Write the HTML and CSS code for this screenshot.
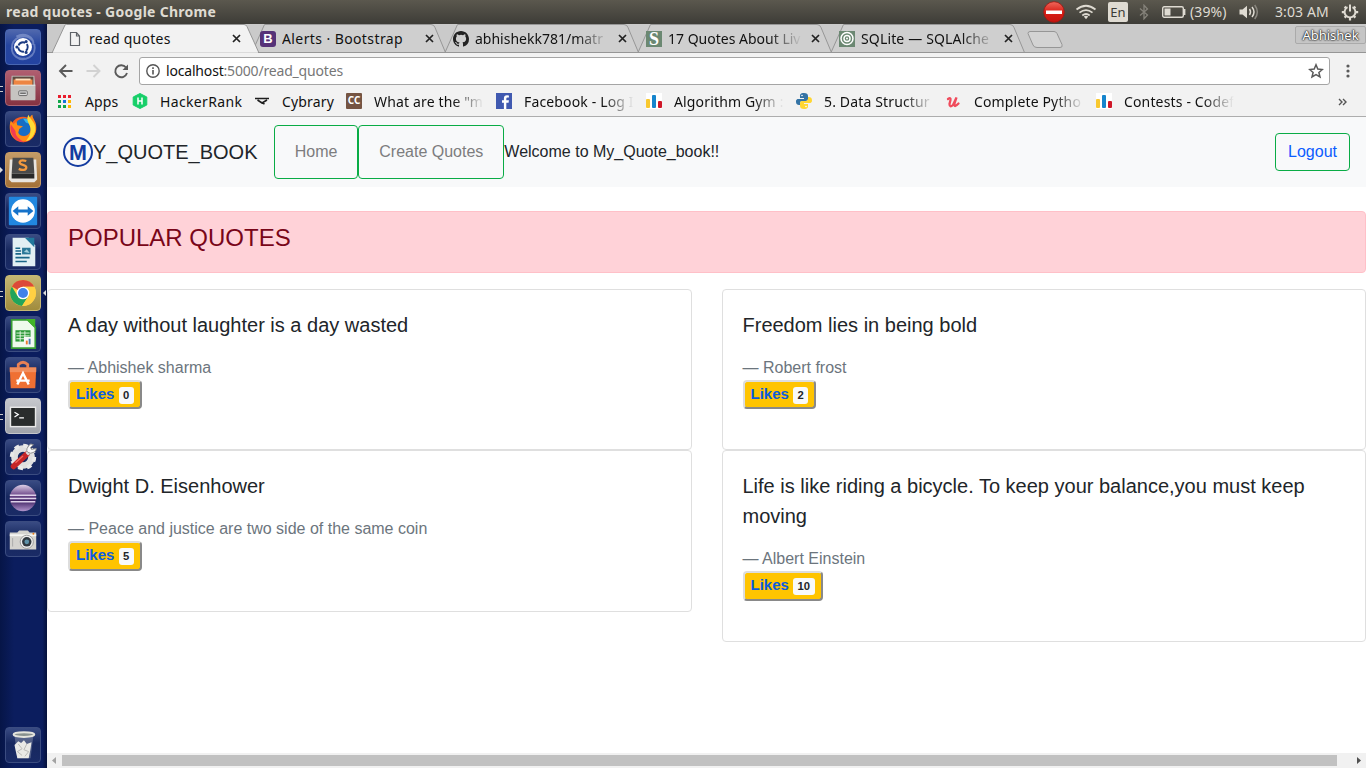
FILE: index.html
```html
<!DOCTYPE html>
<html lang="en">
<head>
<meta charset="utf-8">
<title>read quotes</title>
<link rel="stylesheet" href="styles.css">
</head>
<body>
<header class="panel">
  <span class="panel-title">read quotes - Google Chrome</span>
  <div class="indicators">
    <svg class="ind-stop" width="22" height="22" viewBox="0 0 22 22"><defs><linearGradient id="stop" x2="0" y2="1"><stop stop-color="#f0695c"/><stop offset=".5" stop-color="#d91f17"/><stop offset="1" stop-color="#c5140f"/></linearGradient></defs><circle cx="11" cy="11" r="10.3" fill="url(#stop)" stroke="#a51510" stroke-width=".8"/><rect x="3" y="9.5" width="16" height="3.500" fill="#fff"/></svg>
    <svg class="ind-wifi" width="22" height="16" viewBox="0 0 22 16" fill="none" stroke="#dfdbd2" stroke-width="1.7"><path d="M1.500 5.500Q11-2 20.500 5.500M4.500 8.700Q11 3.500 17.500 8.700M7.300 11.500Q11 8.500 14.700 11.500"/><path d="M8.800 12.500L11 15.300l2.200-2.800Q11 11 8.800 12.500z" fill="#dfdbd2" stroke="none"/></svg>
    <span class="keyboard">En</span>
    <svg class="ind-bt" width="10" height="16" viewBox="0 0 10 16" fill="none" stroke="#85827a" stroke-width="1.300"><path d="M1 4.500l7.500 6.500L5 14.800V1.200L8.500 5 1 11.500"/></svg>
    <svg class="ind-bat" width="24" height="12" viewBox="0 0 24 12"><rect x=".7" y=".7" width="20.600" height="10.600" rx="1.500" fill="none" stroke="#dfdbd2" stroke-width="1.400"/><path d="M2.500 2.500h6v7h-6z" fill="#dfdbd2"/><path d="M22.500 3v6" stroke="#dfdbd2" stroke-width="1.800"/></svg>
    <span class="battery">(39%)</span>
    <svg class="ind-vol" width="20" height="16" viewBox="0 0 20 16"><path d="M.5 5.500h3L8 1.800v12.400L3.500 10.500h-3z" fill="#dfdbd2"/><g fill="none" stroke-width="1.500"><path d="M10.500 5q2 3 0 6" stroke="#dfdbd2"/><path d="M13 3q4 5 0 10" stroke="#dfdbd2"/><path d="M15.700 1q5.300 7 0 14" stroke="#8a877f"/></g></svg>
    <span class="clock">3:03 AM</span>
    <svg class="ind-gear" width="18" height="18" viewBox="0 0 18 18" fill="none" stroke="#dfdbd2"><path d="M6.500 4.200a5.400 5.400 0 1 0 5 0" stroke-width="1.900"/><path d="M9 1.500v7" stroke-width="2"/><path d="M3.600 3.600l1.700 1.700M14.400 3.600l-1.700 1.700M.8 9.200h2.500M14.700 9.200h2.500M3.600 14.600l1.700-1.700M14.400 14.600l-1.700-1.700M9 14.700v2.700" stroke-width="2.200"/></svg>
  </div>
</header>
<div class="desktop">
  <nav class="dock">
    <div class="tile t-dash"><svg viewBox="0 0 36 36"><g fill="none" stroke="#a4b4e0" opacity=".5" stroke-width="2"><path d="M6 20C6 7 22 2 29 12M30 15c3 13-11 20-20 13M11 7c8-5 19 0 18 9M7 17c-3 8 5 15 13 13"/></g><circle cx="18" cy="18" r="9.500" fill="#fff"/><circle cx="18" cy="18" r="5" fill="none" stroke="#1d3c82" stroke-width="2" stroke-dasharray="8.400 2.070" stroke-dashoffset="4"/><g fill="#1d3c82"><circle cx="11.500" cy="18" r="1.600"/><circle cx="21.300" cy="12.300" r="1.600"/><circle cx="21.300" cy="23.700" r="1.600"/></g></svg></div>
    <div class="tile t-files pips"><svg viewBox="0 0 36 36"><path d="M6 5h24l1 10v15H5V15z" fill="#bdbab6"/><path d="M7 6h22v9H7z" fill="#5f4a40"/><path d="M8 9h20v6H8z" fill="#ed8543"/><path d="M10 8h16v2H10z" fill="#ffe0bb"/><path d="M5 15h26v16H5z" fill="#c6c4c1"/><path d="M5 15h26" stroke="#eee"/><rect x="13.500" y="21" width="9" height="5" rx="1" fill="#ddd" stroke="#666"/><path d="M15 23.500h6" stroke="#555" stroke-width="1.300"/></svg></div>
    <div class="tile"><svg viewBox="0 0 36 36"><circle cx="18" cy="18.500" r="13.500" fill="#f65d20"/><circle cx="19" cy="16" r="9.500" fill="#176dc5"/><path d="M18 7q7-1 10 8-3-3-7-4z" fill="#34b7ed"/><path d="M5 9l3 4 3-3 1 4 6 1-4 3-1 4c2 5 9 5 12 0 3-6-1-8-1-12q1-6 4-7c0 5 5 7 4 16-2 12-17 16-25 7C4 23 3 15 5 9z" fill="#ff8b16"/><path d="M24 3c1 5 8 8 7 16-1 6-5 11-10 12 5-6 7-12 3-19-2-4-2-6 0-9z" fill="#ffdb35"/><path d="M5 13C3 23 10 32 19 32c-5-4-9-6-9-12z" fill="#f23c52"/></svg></div>
    <div class="tile t-sublime arrow"><svg viewBox="0 0 36 36"><path d="M4 7h28l1 21-3 3H6l-3-3z" fill="#e9e5df"/><path d="M7 5h22l1 17H6z" fill="#4b4b4b"/><path d="M6 22h24v5H6z" fill="#292929"/><path d="M21.500 8.500q-6-2-7 1c-1 3.500 7 2.500 7 5.500 0 3.500-4.500 3.500-8 1.800" fill="none" stroke="#f39a3f" stroke-width="2.400"/></svg></div>
    <div class="tile"><svg viewBox="0 0 36 36"><rect x="3" y="3" width="30" height="30" rx="1" fill="#2187df"/><circle cx="18" cy="18" r="12.500" fill="#fff"/><path d="M7 18l6-5v3.500h10V13l6 5-6 5v-3.500H13V23z" fill="#1572ca"/></svg></div>
    <div class="tile"><svg viewBox="0 0 36 36"><path d="M7 3h17l7 8v22H7z" fill="#e2f0f4"/><path d="M20 3h10v10z" fill="#22789c"/><path d="M10 14h5M10 17h6M10 20h6M10 24h15M10 28h12" stroke="#196687" stroke-width="1.700"/><path d="M17 13.500h9v7h-9z" fill="#2b7898"/><path d="M19 18l3-3 3 4z" fill="#a5d0dc"/></svg></div>
    <div class="tile t-chrome pips active"><svg viewBox="0 0 36 36"><circle cx="18" cy="18" r="13.700" fill="#ffd043"/><path d="M18 18L6.200 11A13.700 13.700 0 0 1 30 11.500H18z" fill="#dc4939"/><path d="M6.200 11.100A13.700 13.700 0 0 0 17 31.700L24 21l-12 0z" fill="#22a45b"/><path d="M18 11.500h12A13.700 13.700 0 0 1 17 31.700L24 21z" fill="#ffd043"/><circle cx="18" cy="18" r="6.700" fill="#fff"/><circle cx="18" cy="18" r="5.300" fill="#4182e9"/></svg></div>
    <div class="tile"><svg viewBox="0 0 36 36"><path d="M6 3h17l8 8v22H6z" fill="#eefaec" stroke="#379d34" stroke-width="1.800"/><path d="M21 2h10v10z" fill="#42b528"/><path d="M10 14h16v12H10z" fill="#2d9939"/><path d="M11 17h14M11 20h14M11 23h14M15 15v11M20 15v11" stroke="#e6f9e3"/><path d="M19 21h9v9h-9z" fill="#f8f8f8"/><path d="M21 25h2v4h-2z" fill="#ea7a2c"/><path d="M24 23h2v6h-2z" fill="#467cae"/></svg></div>
    <div class="tile"><svg viewBox="0 0 36 36"><path d="M13 11V7q5-5 10 0v4" fill="none" stroke="#e98154" stroke-width="3"/><path d="M4 10h28l-1 22H5z" fill="#ef7033"/><path d="M4 10h28v5H4z" fill="#f18e5d"/><path d="M12 28l6-12 6 12M11 24h14" fill="none" stroke="#fff" stroke-width="2.500"/></svg></div>
    <div class="tile t-term pips"><svg viewBox="0 0 36 36"><path d="M4 8h28v22H4z" fill="#e8e8e8"/><path d="M5.500 9.500h25v19h-25z" fill="#292c2c"/><path d="M9 14l4 2.500L9 19M14 20h5" fill="none" stroke="#fff" stroke-width="1.300"/></svg></div>
    <div class="tile"><svg viewBox="0 0 36 36"><circle cx="18" cy="18" r="9" fill="none" stroke="#dfdfdf" stroke-width="7"/><circle cx="18" cy="18" r="12" fill="none" stroke="#e9e9e9" stroke-width="4" stroke-dasharray="5 4.400"/><path d="M8 28L22 15" stroke="#c52527" stroke-width="6" stroke-linecap="round"/><path d="M10 24l8-7" stroke="#f26a60" stroke-width="1.500"/><path d="M22 15l5-5" stroke="#ddd" stroke-width="4"/><path d="M24 6q-5 7 2 8 6-1 6-5l-5 1-1-2 3-3q-3-2-5 1z" fill="#f7f7f7" stroke="#8b8b8b"/></svg></div>
    <div class="tile"><svg viewBox="0 0 36 36"><defs><linearGradient id="orb" x2="0" y2="1"><stop stop-color="#ddd0e7"/><stop offset=".4" stop-color="#6c4688"/><stop offset=".6" stop-color="#3d2061"/><stop offset="1" stop-color="#b194cc"/></linearGradient></defs><circle cx="18" cy="18" r="14" fill="url(#orb)"/><path d="M4 15h28M4 18.500h28M5 22h26" stroke="#ddd1e9" stroke-width="1.500"/></svg></div>
    <div class="tile"><svg viewBox="0 0 36 36"><path d="M4 11h8l2-2h9l2 2h7v18H4z" fill="#d4d3cf"/><path d="M4 14h28" stroke="#f6f6f3" stroke-width="2"/><circle cx="22" cy="21" r="7" fill="#eee" stroke="#999"/><circle cx="22" cy="21" r="5" fill="#30383f"/><circle cx="22" cy="21" r="2.500" fill="#5d91a8"/><circle cx="29" cy="12.500" r="1" fill="#e87a1a"/><path d="M7 17v9" stroke="#aaa"/></svg></div>
    <div class="tile t-trash"><svg viewBox="0 0 36 36"><path d="M9 8h20l-3 24H12z" fill="#b8bdc9" opacity=".35"/><path d="M9 18l4-4 3 2 3-3 3 4 5-2-1 7-2 10H12L10 23z" fill="#e9e9e6"/><path d="M13 17l4 5-5 3 5 4M22 17l-3 6 5 2-4 5" fill="none" stroke="#b8b8b5"/><ellipse cx="19" cy="7" rx="11" ry="2.500" fill="#87908e" stroke="#e4e4dd" stroke-width="2"/></svg></div>
  </nav>
  <div class="browser">
    <div class="tabs">
      <svg class="tab-shapes" width="1319" height="29" viewBox="0 0 1319 29" fill="#cfcfcf" stroke="#969696"><path d="M0 28.500H1319" fill="none"/><path d="M784 28.500L796.500.5H963q3 0 4 3L977.500 28.500M591 28.500L603.500.5H770q3 0 4 3L784.500 28.500M398 28.500L410.500.5H577q3 0 4 3L591.500 28.500M205 28.500L217.500.5H384q3 0 4 3L398.500 28.500"/><path d="M5 29L18 1Q18.300.5 19.500.5H197q2 0 3 2L212 29z" fill="#f2f2f2"/><path d="M6 29H211" stroke="#f2f2f2"/><path d="M0 28.500H6M211 28.500H1319" /><path d="M983 7.500h24q2 0 3 2l5 11q1 3-2 3h-23q-3 0-4-2.500L981 9.500q0-2 2-2z" fill="#d3d3d3"/></svg>
      <div class="tab"><svg width="16" height="16" viewBox="0 0 16 16" fill="none" stroke="#5f6368"><path d="M3.500 1.500h6l3 3.500v9.500h-9zM9.500 1.500V5h3" stroke-width="1.200"/></svg><span class="tab-label t1">read quotes</span><svg class="close" viewBox="0 0 9 9"><path d="M1 1l7 7M8 1L1 8"/></svg></div>
      <div class="tab"><span class="fav boot">B</span><span class="tab-label t2">Alerts · Bootstrap</span><svg class="close" viewBox="0 0 9 9"><path d="M1 1l7 7M8 1L1 8"/></svg></div>
      <div class="tab"><svg width="16" height="16" viewBox="0 0 16 16"><path fill="#222" d="M8 0C3.580 0 0 3.580 0 8c0 3.540 2.290 6.530 5.470 7.590.4.070.55-.17.55-.38 0-.19-.01-.82-.01-1.490-2.010.37-2.530-.49-2.690-.94-.09-.23-.48-.94-.82-1.130-.28-.15-.68-.52-.01-.53.63-.01 1.080.58 1.230.82.72 1.210 1.870.87 2.330.66.070-.52.28-.87.51-1.070-1.780-.2-3.640-.89-3.640-3.950 0-.87.31-1.590.82-2.150-.08-.2-.36-1.020.08-2.120 0 0 .67-.21 2.200.82a7.500 7.500 0 0 1 4 0c1.530-1.040 2.200-.82 2.200-.82.44 1.100.16 1.920.08 2.120.51.56.82 1.270.82 2.150 0 3.070-1.870 3.750-3.650 3.950.29.25.54.73.54 1.480 0 1.070-.01 1.930-.01 2.200 0 .21.15.46.55.38A8 8 0 0 0 16 8c0-4.420-3.580-8-8-8z"/></svg><span class="tab-label long">abhishekk781/matr</span><svg class="close" viewBox="0 0 9 9"><path d="M1 1l7 7M8 1L1 8"/></svg></div>
      <div class="tab"><span class="fav quotes">S</span><span class="tab-label long">17 Quotes About Liv</span><svg class="close" viewBox="0 0 9 9"><path d="M1 1l7 7M8 1L1 8"/></svg></div>
      <div class="tab"><svg width="16" height="16" viewBox="0 0 16 16"><path d="M0 0h16v16H0z" fill="#6b8872"/><g fill="none" stroke="#fff" stroke-width="1.500"><circle cx="8" cy="7.500" r="6"/><circle cx="8" cy="7.500" r="3"/></g><circle cx="8" cy="7.500" r="1" fill="#fff"/></svg><span class="tab-label long t5">SQLite — SQLAlche</span><svg class="close" viewBox="0 0 9 9"><path d="M1 1l7 7M8 1L1 8"/></svg></div>
      <span class="profile">Abhishek</span>
    </div>
    <div class="toolbar">
      <svg width="82" height="20" viewBox="0 0 82 20" fill="none" stroke-width="1.900"><path d="M15.500 10H2.500M9 4l-6 6 6 6" stroke="#5a5a5a"/><path d="M29.500 10H42M36.500 4l6 6-6 6" stroke="#d2d2d2"/><path d="M69 6.500A6 6 0 1 0 70 12" stroke="#5a5a5a"/><path d="M71 3.500V9h-5.500z" fill="#5a5a5a" stroke="none"/></svg>
      <div class="address">
        <svg width="14" height="14" viewBox="0 0 14 14" fill="none" stroke="#555"><circle cx="7" cy="7" r="6.200" stroke-width="1.400"/><path d="M7 6v4.500M7 3.300V5" stroke-width="1.600"/></svg>
        <span class="url">localhost<span class="url-rest">:5000/read_quotes</span></span>
        <svg class="star" width="16" height="16" viewBox="0 0 16 16" fill="none" stroke="#5a5a5a" stroke-width="1.500"><path d="M8 1.800l1.800 4.300 4.600.4-3.500 3 1.100 4.500L8 11.600 4 14l1.100-4.500-3.500-3 4.600-.4z"/></svg>
      </div>
      <svg width="4" height="16" viewBox="0 0 4 16" fill="#5a5a5a"><circle cx="2" cy="3" r="1.600"/><circle cx="2" cy="8" r="1.600"/><circle cx="2" cy="13" r="1.600"/></svg>
    </div>
    <div class="bookmarks">
      <div class="bm apps"><svg width="16" height="16" viewBox="0 0 16 16"><path d="M2 2h3v3H2zM7 2h3v3H7zM12 2h3v3h-3z" fill="#e91d2d"/><path d="M2 7h3v3H2zM2 12h3v3H2z" fill="#10a64a"/><path d="M7 7h3v3H7z" fill="#1672df"/><path d="M12 7h3v3h-3zM12 12h3v3h-3z" fill="#ffb600"/><path d="M7 12h3v3H7z" fill="#10a64a"/></svg><span>Apps</span></div>
      <div class="bm hacker"><svg width="16" height="16" viewBox="0 0 16 16"><path d="M8 .5L14.800 4v8L8 15.500 1.200 12V4z" fill="#17cf69" stroke="#17cf69" stroke-linejoin="round"/><path d="M6 4.500v7M10 4.500v7M6 8h4" stroke="#fff" stroke-width="1.500"/></svg><span>HackerRank</span></div>
      <div class="bm cyb"><svg width="16" height="16" viewBox="0 0 16 16"><path d="M1 5.500h14M3.500 7l4.500 3L13 7M7.500 9.500l3 1.500" fill="none" stroke="#1e1e1e" stroke-width="1.600"/></svg><span>Cybrary</span></div>
      <div class="bm"><span class="fav cc">CC</span><span class="bm-text">What are the "m</span></div>
      <div class="bm"><svg width="16" height="16" viewBox="0 0 16 16"><path d="M0 0h16v16H0z" fill="#4059b0"/><path d="M10.300 16V9.700h2.300l.3-2.400h-2.600V5.800q0-1.300 1.300-1.300h1.300V2.400q-5-1-5 2.800v2.100H6v2.400h1.900V16z" fill="#fff"/></svg><span class="bm-text">Facebook - Log I</span></div>
      <div class="bm"><svg width="16" height="16" viewBox="0 0 16 16"><path d="M0 0h16v16H0z" fill="#fff"/><rect y="6" width="4" height="9" rx="1" fill="#f8c82f"/><rect x="6" y="2" width="4" height="13" rx="1" fill="#1685cd"/><rect x="12" y="8" width="4" height="7" rx="1" fill="#cf1728"/></svg><span class="bm-text">Algorithm Gym :</span></div>
      <div class="bm"><svg width="16" height="16" viewBox="0 0 16 16"><path d="M8 0C4 0 4 2 4 3v2h4v1H2.500C0 6 0 8 0 8.500S0 12 3 12h1v-2q0-2 2.500-2H10q2 0 2-2V3q0-3-4-3z" fill="#3473a5"/><path d="M8 16c4 0 4-2 4-3v-2H8v-1h5.500C16 10 16 8 16 7.500S16 4 13 4h-1v2q0 2-2.500 2H6q-2 0-2 2v3q0 3 4 3z" fill="#ffd631"/><circle cx="6" cy="2.500" r=".8" fill="#fff"/><circle cx="10" cy="13.500" r=".8" fill="#fff"/></svg><span class="bm-text">5. Data Structur</span></div>
      <div class="bm"><svg width="16" height="16" viewBox="0 0 16 16"><path d="M2 6q3-2 2.500 1L3.500 11q0 4 3.500 1l3.500-7.500-2 6q-.7 5 4 0" fill="none" stroke="#f04b5c" stroke-width="2.300" stroke-linecap="round"/></svg><span class="bm-text">Complete Pytho</span></div>
      <div class="bm"><svg width="16" height="16" viewBox="0 0 16 16"><path d="M0 0h16v16H0z" fill="#fff"/><rect y="6" width="4" height="9" rx="1" fill="#f8c82f"/><rect x="6" y="2" width="4" height="13" rx="1" fill="#1685cd"/><rect x="12" y="8" width="4" height="7" rx="1" fill="#cf1728"/></svg><span class="bm-text">Contests - Codef</span></div>
      <svg class="more" width="9" height="8" viewBox="0 0 9 8" fill="none" stroke="#555" stroke-width="1.400"><path d="M1 1l3 3-3 3M5 1l3 3-3 3"/></svg>
    </div>
    <main class="page">
      <nav class="navbar">
        <svg class="logo" width="30" height="30" viewBox="0 0 30 30"><circle cx="15" cy="15" r="14" fill="none" stroke="#143ca0" stroke-width="2"/><text class="logo-letter" x="15" y="22.500" text-anchor="middle">M</text></svg>
        <span class="brand">Y_QUOTE_BOOK</span>
        <a class="nav-btn">Home</a><a class="nav-btn">Create Quotes</a>
        <span class="welcome">Welcome to My_Quote_book!!</span>
        <a class="logout">Logout</a>
      </nav>
      <h4 class="alert">POPULAR QUOTES</h4>
      <div class="columns">
        <div class="column">
          <article class="card"><p class="quote">A day without laughter is a day wasted</p><footer class="author">— Abhishek sharma</footer><button class="likes">Likes <span class="badge">0</span></button></article>
          <article class="card"><p class="quote">Dwight D. Eisenhower</p><footer class="author">— Peace and justice are two side of the same coin</footer><button class="likes">Likes <span class="badge">5</span></button></article>
        </div>
        <div class="column">
          <article class="card"><p class="quote">Freedom lies in being bold</p><footer class="author">— Robert frost</footer><button class="likes">Likes <span class="badge">2</span></button></article>
          <article class="card"><p class="quote">Life is like riding a bicycle. To keep your balance,you must keep moving</p><footer class="author">— Albert Einstein</footer><button class="likes">Likes <span class="badge">10</span></button></article>
        </div>
      </div>
    </main>
    <div class="scrollbar"><svg width="15" height="15" viewBox="0 0 15 15"><path d="M9 4v7L5 7.500z" fill="#a3a3a3"/></svg><div class="thumb"></div><svg width="15" height="15" viewBox="0 0 15 15"><path d="M6 4v7l4-3.500z" fill="#505050"/></svg></div>
  </div>
</div>
</body>
</html>
```

FILE: styles.css
```css
* { box-sizing: border-box; }
body { margin: 0; width: 1366px; height: 768px; overflow: hidden; font-family: "Noto Sans", sans-serif; font-size: 14px; color: #111; }
svg { display: block; flex: none; }
.panel { height: 24px; display: flex; align-items: center; justify-content: space-between; padding: 0 7px 0 6px; background: linear-gradient(#5b584e, #3d3c37); color: #dfdbd2; }
.panel-title { font-weight: 700; font-size: 14px; line-height: 24px; letter-spacing: .28px; white-space: nowrap; }
.indicators { display: flex; align-items: center; height: 24px; line-height: 24px; font-size: 14px; white-space: nowrap; }
.ind-wifi { margin-left: 10px; }
.keyboard { width: 20px; height: 20px; margin-left: 11px; border-radius: 2px; background: #dfdbd2; color: #3c3b37; text-align: center; line-height: 21px; font-size: 13px; }
.ind-bt { margin-left: 11px; }
.ind-bat { margin-left: 13px; }
.battery { width: 38px; margin-left: 4px; letter-spacing: .1px; }
.ind-vol { margin-left: 11px; }
.clock { width: 54px; margin-left: 16px; letter-spacing: .1px; }
.ind-gear { margin-left: 12px; }
.desktop { display: flex; height: 744px; }
.dock { width: 47px; flex: none; display: flex; flex-direction: column; gap: 5px; padding: 5px 0 5px 5px; background: linear-gradient(90deg, #061547, #0b1d5e 30%, #0b1d5e 90%, #051039); }
.tile { position: relative; width: 36px; height: 36px; border-radius: 4px; border: 1px solid #3b4c80; background: linear-gradient(#394b83, #17285f 45%, #1a2b66); }
.tile svg { width: 34px; height: 34px; }
.t-dash { background: linear-gradient(#5068ad, #2545a0 45%, #2443a0); border-color: #4866b2; }
.t-files { background: linear-gradient(#b05e70, #853342); border-color: #aa6574; }
.t-sublime { background: linear-gradient(#c49b67, #a47137); border-color: #c59b65; }
.t-chrome { background: linear-gradient(#c4b674, #a18c3c); border-color: #c5b773; }
.t-term { background: linear-gradient(#c5c7cc, #a0a3aa); border-color: #c5c6cb; }
.t-trash { margin-top: auto; }
.pips::before { content: ""; position: absolute; left: -6px; top: 15px; width: 3px; height: 4px; border: solid #ccc; border-width: 1.500px 0; }
.arrow::before, .active::after { content: ""; position: absolute; border: 3px solid transparent; }
.arrow::before { left: -6px; top: 14px; border-left-color: #ddd; border-right: 0; }
.active::after { right: -6px; top: 14px; border-right-color: #ddd; border-left: 0; }
.browser { width: 1319px; height: 744px; display: flex; flex-direction: column; background: #fff; }
.tabs { position: relative; height: 29px; padding-left: 20px; display: flex; background: #cacaca; }
.tab-shapes { position: absolute; left: 0; top: 0; }
.tab { position: relative; width: 193px; height: 29px; display: flex; align-items: center; }
.tab-label { width: 134px; margin: 0 8px 0 6px; white-space: nowrap; overflow: hidden; line-height: 28px; }
.t1 { letter-spacing: .25px; }
.t2 { letter-spacing: .4px; }
.t5 { letter-spacing: .15px; }
.long { -webkit-mask-image: linear-gradient(90deg, #000 75%, transparent 100%); mask-image: linear-gradient(90deg, #000 75%, transparent 100%); }
.close { width: 9px; height: 9px; margin-left: .5px; stroke: #222; stroke-width: 1.700; fill: none; }
.fav { flex: none; width: 16px; height: 16px; text-align: center; font-weight: 700; color: #fff; line-height: 16px; }
.boot { background: #563278; border-radius: 3px; font: 700 13px/16px "Liberation Sans", sans-serif; }
.quotes { background: #6b8872; font: 700 18px/17px "Liberation Serif", serif; }
.cc { background: #755442; font-size: 10px; line-height: 15px; border-radius: 1px; letter-spacing: 0; }
.profile { position: relative; margin: 2px 0 0 auto; width: 71px; height: 18px; border: 1px solid #aaa; border-radius: 2px; background: #c5c5c5; color: #fff; font-size: 13px; line-height: 16px; text-align: center; text-shadow: 0 0 2px #222, 0 0 2px #222, 0 0 1px #222; }
.toolbar { height: 35px; padding: 0 16px 0 10px; display: flex; align-items: center; justify-content: space-between; background: #f2f2f2; }
.toolbar > svg:last-child { margin-left: 16px; }
.address { flex: 1; height: 28px; padding: 0 5px 0 6px; display: flex; align-items: center; background: #fff; border: 1px solid #a5a5a5; border-radius: 3px; }
.url { margin-left: 6px; line-height: 26px; letter-spacing: -.18px; }
.url-rest { color: #777; }
.star { margin-left: auto; }
.bookmarks { height: 29px; display: flex; align-items: center; padding: 0 0 2px 9px; letter-spacing: .15px; background: #f2f2f2; border-bottom: 1px solid #adadad; }
.bm { width: 150px; flex: none; display: flex; align-items: center; gap: 12px; white-space: nowrap; }
.apps { width: 76px; gap: 13px; }
.hacker { width: 122px; letter-spacing: .35px; }
.cyb { width: 92px; }
.bm-text { width: 110px; overflow: hidden; -webkit-mask-image: linear-gradient(90deg, #000 72%, transparent 100%); mask-image: linear-gradient(90deg, #000 72%, transparent 100%); }
.more { margin: 1px 0 0 92px; }
.page { flex: 1; background: #fff; font: 16px/24px "Liberation Sans", Arial, sans-serif; color: #212529; }
.navbar { height: 70px; display: flex; align-items: center; padding: 0 16px; background: #f8f9fa; }
.logo-letter { font: 700 21.500px "Liberation Sans", Arial, sans-serif; fill: #143ca0; }
.brand { width: 181px; font-size: 20px; line-height: 30px; }
.nav-btn { height: 54px; padding: 0 20px; line-height: 52px; border: 1px solid #09ac45; border-radius: 4px; color: #7d7d7e; white-space: nowrap; }
.nav-btn:first-of-type { padding: 0 19.800px; }
.logout { height: 38px; margin-left: auto; padding: 0 12px; line-height: 36px; border: 1px solid #09ac45; border-radius: 4px; color: #0b5cff; }
.alert { height: 62px; margin: 24px 0 16px; padding: 12px 20px; border: 1px solid #ffc0c8; border-radius: 4px; background: #ffd2d8; color: #790619; font-size: 24px; font-weight: 400; line-height: 28.800px; }
.columns { display: grid; grid-template-columns: 1fr 1fr; gap: 30px; align-items: start; }
.card { padding: 20px 20px 40px; border: 1px solid #dfdfdf; border-radius: 4px; }
.quote { margin: 0 0 16px; font-size: 20px; line-height: 30px; }
.author { color: #6c757d; }
.likes { display: block; height: 29.250px; padding: 0 6px 1.500px; border: 2px outset #ddd; border-radius: 4px; background: #ffc400; color: #0b5cdf; font: 700 15px/22.500px "Liberation Sans", Arial, sans-serif; }
.badge { display: inline-block; padding: .25em .4em; border-radius: 3px; background: #f8f9fa; color: #212529; font-size: 11.250px; line-height: 1; vertical-align: baseline; }
.scrollbar { height: 15px; display: flex; background: #f1f1f1; }
.thumb { width: 1275px; height: 11px; margin-top: 2px; background: #c1c1c1; }
.scrollbar svg:last-child { margin-left: auto; }
```
